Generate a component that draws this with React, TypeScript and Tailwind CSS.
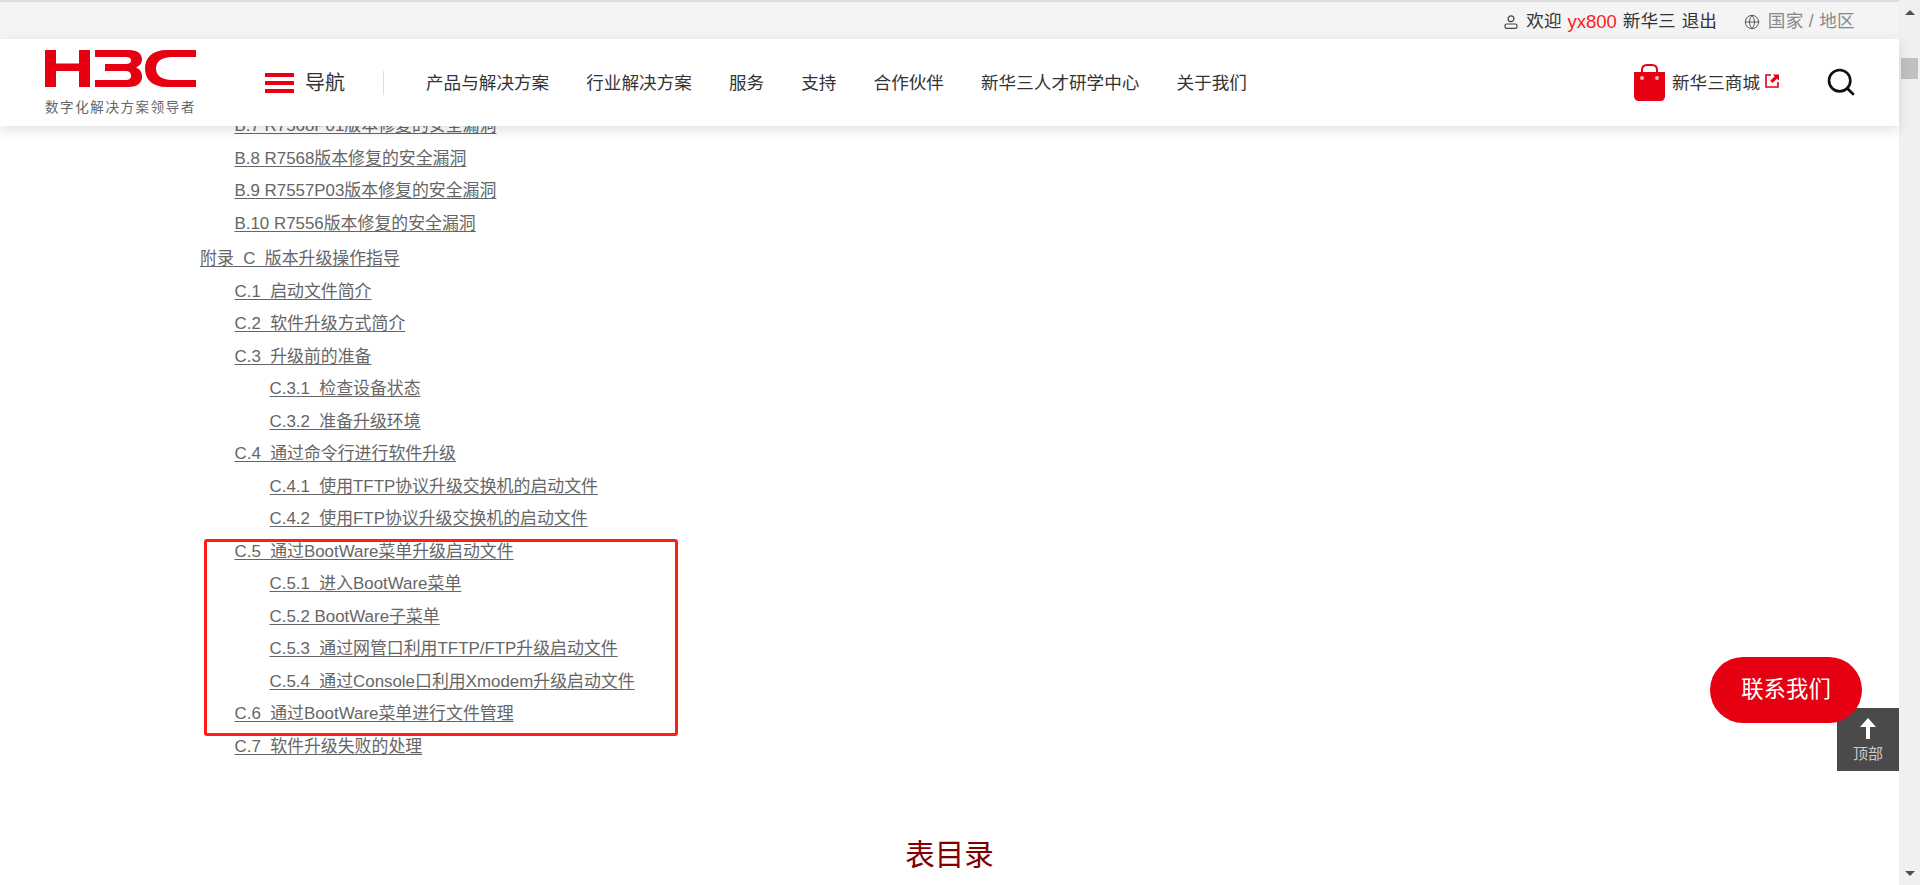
import React from "react";
import { Globe, Search } from "lucide-react";

const FONT = "font-['Liberation_Sans','Noto_Sans_CJK_SC',sans-serif]";
const NB = "\u00a0\u00a0";

type Row = { t: string; l: 0 | 1 | 2; extra?: boolean };
const rows: Row[] = [
  { t: "B.7 R7568P01版本修复的安全漏洞", l: 1 },
  { t: "B.8 R7568版本修复的安全漏洞", l: 1 },
  { t: "B.9 R7557P03版本修复的安全漏洞", l: 1 },
  { t: "B.10 R7556版本修复的安全漏洞", l: 1 },
  { t: `附录${NB}C${NB}版本升级操作指导`, l: 0, extra: true },
  { t: `C.1${NB}启动文件简介`, l: 1 },
  { t: `C.2${NB}软件升级方式简介`, l: 1 },
  { t: `C.3${NB}升级前的准备`, l: 1 },
  { t: `C.3.1${NB}检查设备状态`, l: 2 },
  { t: `C.3.2${NB}准备升级环境`, l: 2 },
  { t: `C.4${NB}通过命令行进行软件升级`, l: 1 },
  { t: `C.4.1${NB}使用TFTP协议升级交换机的启动文件`, l: 2 },
  { t: `C.4.2${NB}使用FTP协议升级交换机的启动文件`, l: 2 },
  { t: `C.5${NB}通过BootWare菜单升级启动文件`, l: 1 },
  { t: `C.5.1${NB}进入BootWare菜单`, l: 2 },
  { t: "C.5.2 BootWare子菜单", l: 2 },
  { t: `C.5.3${NB}通过网管口利用TFTP/FTP升级启动文件`, l: 2 },
  { t: `C.5.4${NB}通过Console口利用Xmodem升级启动文件`, l: 2 },
  { t: `C.6${NB}通过BootWare菜单进行文件管理`, l: 1 },
  { t: `C.7${NB}软件升级失败的处理`, l: 1 },
];

const nav = ["产品与解决方案", "行业解决方案", "服务", "支持", "合作伙伴", "新华三人才研学中心", "关于我们"];

function Logo() {
  return (
    <svg width="151" height="37" viewBox="0 0 151 37" fill="#e60012" aria-hidden="true">
      <path d="M0 0H11V13.5H34V0H45V37H34V21H11V37H0Z" />
      <path d="M50 0H84C93 0 97 4 97 9.5C97 13 95 16 91 17.5C95 19 97 22 97 27C97 33 92 37 84 37H50V30H80C84.5 30 86 28.5 86 26C86 22.5 84.5 21 80 21H60V14H80C84.5 14 86 12.5 86 10.5C86 8 84.5 7 80 7H50Z" />
      <path d="M151 0H122C107 0 100 8 100 18.5C100 29 107 37 122 37H151V30H127C116 30 111 25 111 18.5C111 12 116 7 127 7H151Z" />
    </svg>
  );
}

function Bag() {
  return (
    <svg width="31" height="37" viewBox="0 0 31 37" aria-hidden="true">
      <path d="M8 13V6C8 2.5 10 1 13 1H18C21 1 23 2.5 23 6V13" fill="none" stroke="#e60012" strokeWidth="2" />
      <path d="M1 8H30C30.6 8 31 8.4 31 9V32C31 35 29 37 26 37H5C2 37 0 35 0 32V9C0 8.4 .4 8 1 8Z" fill="#e60012" />
      <circle cx="8" cy="14" r="2" fill="#f6b3b8" />
      <circle cx="23" cy="14" r="2" fill="#f6b3b8" />
    </svg>
  );
}

function ExternalMark() {
  return (
    <svg width="14" height="14" viewBox="0 0 14 14" aria-hidden="true">
      <path d="M6 1H1V13H13V8" fill="none" stroke="#e60012" strokeWidth="1.6" />
      <path d="M8 0.5H14V6.5L12 4.8L7.5 9L5.2 6.8L9.6 2.4Z" fill="#e60012" />
    </svg>
  );
}

function UserMark() {
  return (
    <svg width="14" height="14" viewBox="0 0 14 14" fill="none" stroke="#444" strokeWidth="1.2" aria-hidden="true">
      <circle cx="7" cy="3.8" r="2.9" />
      <rect x="1" y="9" width="12" height="4.4" rx="1.6" />
    </svg>
  );
}

function UpArrow() {
  return (
    <svg width="16" height="21" viewBox="0 0 16 21" fill="#fff" aria-hidden="true">
      <path d="M8 0L16 9H10V21H6V9H0Z" />
    </svg>
  );
}

function ScrollRail() {
  return (
    <div className="w-[21px] shrink-0 bg-[#f0f0f0] flex flex-col items-center justify-between h-full">
      <div className="flex flex-col items-center w-full">
        <div className="mt-[10px] w-0 h-0 border-x-[5px] border-x-transparent border-b-[5px] border-b-[#505050]" />
        <div className="mt-[43px] w-[17px] h-[21px] bg-[#c1c1c1]" />
      </div>
      <div className="mb-[9px] w-0 h-0 border-x-[5px] border-x-transparent border-t-[5px] border-t-[#505050]" />
    </div>
  );
}

export default function App() {
  return (
    <div className={`${FONT} flex w-[1920px] h-[885px] overflow-hidden bg-white`}>
      <div className="relative flex-1 min-w-0 flex flex-col h-full">
        {/* top utility bar */}
        <div className="h-[39px] shrink-0 bg-[#f4f4f4] border-t-2 border-[#dddddd] pt-[2px] flex items-center justify-end pr-[44px] text-[17.6px] text-[#333]">
          <UserMark />
          <span className="ml-[8px]">欢迎</span>
          <span className="ml-[6px] text-[18.5px] text-[#ff1a1a]">yx800</span>
          <span className="ml-[6px]">新华三</span>
          <span className="ml-[6px]">退出</span>
          <Globe className="ml-[27px]" size={16} strokeWidth={1.3} color="#444" />
          <span className="ml-[8px] tracking-[0.3px] text-[#888]">国家 / 地区</span>
        </div>

        {/* main header */}
        <header className="relative z-10 h-[87px] shrink-0 bg-white shadow-[0_4px_12px_rgba(0,0,0,0.12)] flex items-center pl-[45px] pr-[42px]">
          <div className="flex flex-col w-[151px] mt-[1px]">
            <Logo />
            <span className="mt-[13px] text-[13.5px] tracking-[1.6px] leading-[16px] text-[#666] whitespace-nowrap">数字化解决方案领导者</span>
          </div>
          <div className="ml-[69px] flex items-center">
            <div className="flex flex-col gap-[4px] w-[29px]">
              <span className="h-[4px] bg-[#e60012]" />
              <span className="h-[4px] bg-[#e60012]" />
              <span className="h-[4px] bg-[#e60012]" />
            </div>
            <span className="ml-[11px] text-[20px] text-[#333]">导航</span>
            <span className="ml-[38px] w-px h-[24px] bg-[#dddddd]" />
          </div>
          <nav className="ml-[42px] mt-[1px] flex items-center gap-[37.1px] text-[17.6px] text-[#333] whitespace-nowrap">
            {nav.map((n) => (
              <span key={n}>{n}</span>
            ))}
          </nav>
          <div className="ml-auto flex items-center">
            <Bag />
            <span className="ml-[7px] mt-[1px] text-[17.6px] text-[#333]">新华三商城</span>
            <span className="ml-[5px] -mt-[3px]">
              <ExternalMark />
            </span>
            <Search className="ml-[46px] -mt-[2px]" size={32} strokeWidth={2} color="#111" />
          </div>
        </header>

        {/* document body */}
        <main className="flex-1 min-h-0 overflow-hidden">
          <div className="-mt-[16px] pl-[200px] text-[16.9px] leading-[32.5px] text-[#666]">
            {rows.map((r) => (
              <div
                key={r.t}
                className={`${r.l === 1 ? "pl-[34.5px]" : r.l === 2 ? "pl-[69.5px]" : ""} ${r.extra ? "mt-[3px]" : ""}`}
              >
                <span className="underline underline-offset-2">{r.t}</span>
              </div>
            ))}
          </div>
          <h2 className="mt-[74px] text-center text-[29.5px] leading-[36px] text-[#800000]">表目录</h2>
        </main>

        {/* screenshot annotation */}
        <div className="absolute left-[204px] top-[539px] w-[474px] h-[197px] border-[3px] border-[#ff2015] rounded-[3px]" />

        {/* floating buttons */}
        <div className="absolute right-0 top-[708px] w-[62px] h-[63px] bg-[#4a4a4a] flex flex-col items-center pt-[10px]">
          <UpArrow />
          <span className="mt-[6px] text-[15px] leading-[18px] text-[#ccc]">顶部</span>
        </div>
        <div className="absolute left-[1710px] top-[657px] w-[152px] h-[66px] rounded-full bg-[#e60012] flex items-center justify-center text-[22.4px] text-white">
          联系我们
        </div>
      </div>
      <ScrollRail />
    </div>
  );
}
